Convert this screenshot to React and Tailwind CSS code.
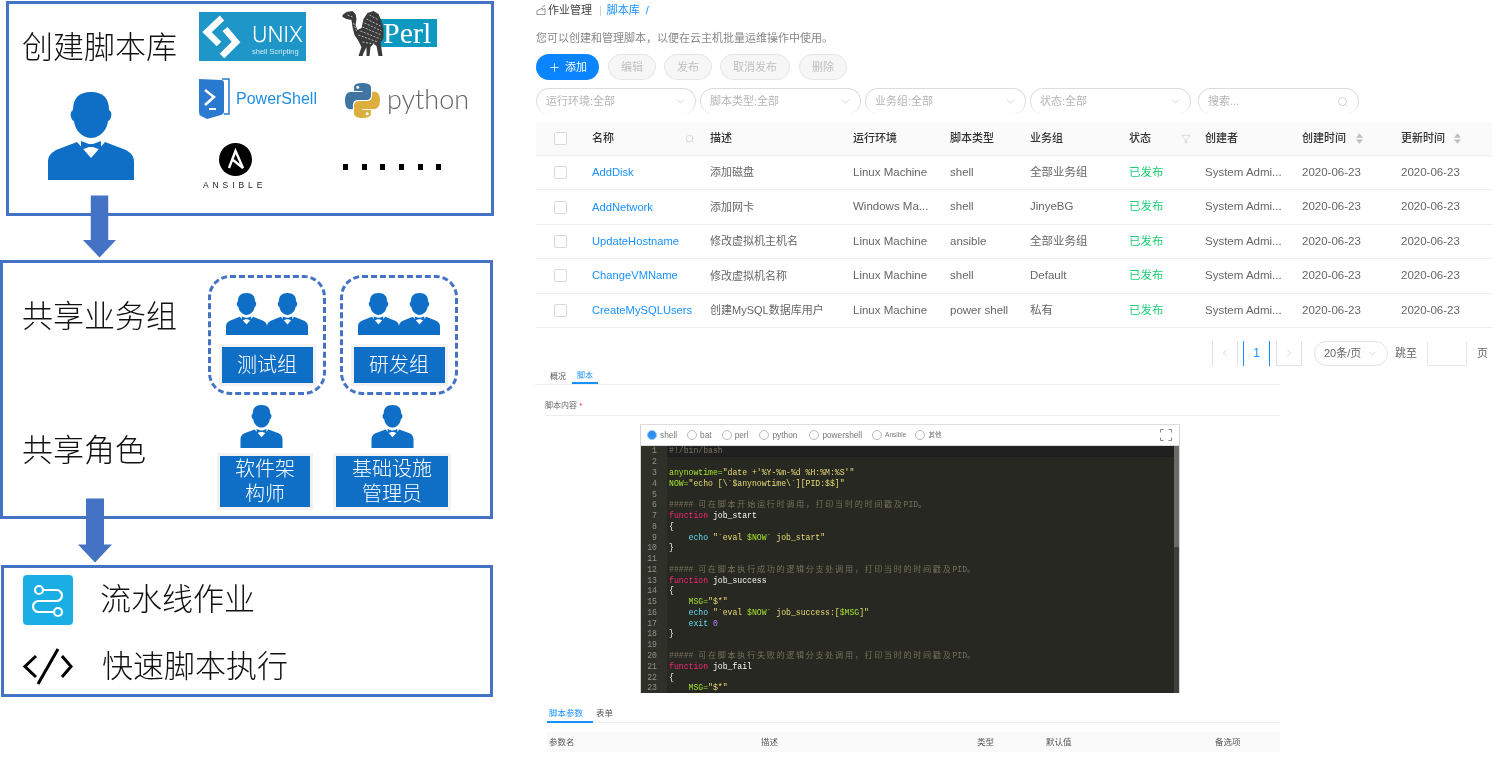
import { ChevronDown, ChevronLeft, ChevronRight, Funnel, Plus, Search } from 'lucide-react';

const sans = "[font-family:'Liberation_Sans','Noto_Sans_CJK_SC',sans-serif]";

const scripts = [
    { name: 'AddDisk', desc: '添加磁盘', env: 'Linux Machine', type: 'shell', group: '全部业务组' },
    { name: 'AddNetwork', desc: '添加网卡', env: 'Windows Ma...', type: 'shell', group: 'JinyeBG' },
    { name: 'UpdateHostname', desc: '修改虚拟机主机名', env: 'Linux Machine', type: 'ansible', group: '全部业务组' },
    { name: 'ChangeVMName', desc: '修改虚拟机名称', env: 'Linux Machine', type: 'shell', group: 'Default' },
    { name: 'CreateMySQLUsers', desc: '创建MySQL数据库用户', env: 'Linux Machine', type: 'power shell', group: '私有' },
];

const cols = 'grid grid-cols-[56px_118px_143px_97px_80px_99px_76px_97px_99px_91px] items-center';

const C = 'text-[#75715e]';
const G = 'text-[#a6e22e]';
const Y = 'text-[#e6db74]';
const P = 'text-[#f92672]';
const W = 'text-[#f8f8f2]';
const B = 'text-[#66d9ef]';
const V = 'text-[#ae81ff]';

const comment = (cn) => [['##### ', C], [cn, `${C} tracking-[1.65px]`], ['PID', C], ['。', `${C} tracking-[1.65px]`]];

const code = [
    [['#!/bin/bash', C]],
    [],
    [['anynowtime=', G], ['"date +\'%Y-%m-%d %H:%M:%S\'"', Y]],
    [['NOW=', G], ['"echo [\\`$anynowtime\\`][PID:$$]"', Y]],
    [],
    comment('可在脚本开始运行时调用，打印当时的时间戳及'),
    [['function ', P], ['job_start', W]],
    [['{', W]],
    [['    echo ', B], ['"`eval ', Y], ['$NOW', G], ['` job_start"', Y]],
    [['}', W]],
    [],
    comment('可在脚本执行成功的逻辑分支处调用，打印当时的时间戳及'),
    [['function ', P], ['job_success', W]],
    [['{', W]],
    [['    MSG=', G], ['"$*"', Y]],
    [['    echo ', B], ['"`eval ', Y], ['$NOW', G], ['` job_success:[', Y], ['$MSG', G], [']"', Y]],
    [['    exit ', B], ['0', V]],
    [['}', W]],
    [],
    comment('可在脚本执行失败的逻辑分支处调用，打印当时的时间戳及'),
    [['function ', P], ['job_fail', W]],
    [['{', W]],
    [['    MSG=', G], ['"$*"', Y]],
];

const languages = [
    { label: 'shell', gap: 'ml-0', active: true },
    { label: 'bat', gap: 'ml-[10px]' },
    { label: 'perl', gap: 'ml-[10px]' },
    { label: 'python', gap: 'ml-[11px]' },
    { label: 'powershell', gap: 'ml-[12px]' },
    { label: 'Ansible', gap: 'ml-[10px]', small: true },
    { label: '其他', gap: 'ml-[9px]', small: true },
];

function Person({ className }) {
    return (
        <svg viewBox="0 0 86 88" className={className} fill="#0f6fc6">
            <path d="M43 0C55 0 61 6 61 18C63 19 64 22 63 25C62 28 61 29 60 29C59 39 51 46 43 46C35 46 27 39 26 29C25 29 24 28 23 25C22 22 23 19 25 18C25 6 31 0 43 0Z" />
            <path d="M0 88V70C0 64 3 61 8 58L29 50L43 66L57 50L78 58C83 61 86 64 86 70V88Z" />
            <path d="M33 49L41 52H45L53 49V58L45 55H41L33 58Z" />
        </svg>
    );
}

function Duo() {
    return (
        <div className="flex">
            <Person className="w-[41px] h-[44px]" />
            <Person className="w-[41px] h-[44px]" />
        </div>
    );
}

function Tag({ outer, children }) {
    return (
        <div className={`bg-[#f2f2f2] p-[3px] ${outer}`}>
            <div className="h-full bg-[#0f6fc6] text-white text-[20px] leading-[25px] font-light flex items-center justify-center text-center">
                {children}
            </div>
        </div>
    );
}

function Arrow({ className }) {
    return (
        <svg viewBox="0 0 34 64" className={`absolute ${className}`} fill="#4472c4">
            <path d="M8 0H26V46H34L17 64L0 46H8Z" />
        </svg>
    );
}

function Logos() {
    return (
        <div className="pt-[7px] grid grid-cols-[143px_125px] grid-rows-[67px_65px_auto]">
            <div className="mt-[1px] w-[107px] h-[49px] bg-[#1e96c8] flex">
                <svg viewBox="0 0 50 49" className="w-[50px] h-[49px] shrink-0" fill="none" stroke="#fff" strokeWidth="6.5">
                    <path d="M23 6L8 20L20 32" />
                    <path d="M26 17L37 30L23 44" />
                </svg>
                <div className="pl-[3px] flex flex-col text-white">
                    <span className="text-[21px] leading-[24px] mt-[11px] font-light [font-family:Inter,sans-serif]">UNIX</span>
                    <span className="text-[7.5px] leading-[10px] whitespace-nowrap opacity-80">shell Scripting</span>
                </div>
            </div>
            <div className="flex items-start">
                <svg viewBox="0 0 42 46" className="w-[43px] h-[46px] shrink-0 relative z-10" fill="#3a3a3a">
                    <path d="M0 4L4 1L10 0L13 3L14 8L13 14L15 19L19 17L21 8L25 2L31 0L36 3L39 10L41 18L41 27L38 32L39 38L40 45H36L34 35L31 33L28 36L27 45H24L24 36L21 42L20 45H16L19 36L16 30L12 24L10 16L9 9L4 8L0 6Z" />
                    <path d="M18 20L38 28M20 16L39 24M22 12L39 20M24 8L38 15M16 24L35 31M27 4L36 9M5 4L10 6M11 12L14 20M20 31L32 33" stroke="#c8c8c8" strokeWidth="0.9" strokeDasharray="2 1.5" fill="none" />
                </svg>
                <div className="-ml-[5px] mt-[8px] w-[57px] h-[28px] bg-[#0d98bf] text-white text-[30px] leading-[28px] pl-[3px] [font-family:'Liberation_Serif',serif]">
                    Perl
                </div>
            </div>
            <div className="flex items-start">
                <svg viewBox="0 0 31 41" className="w-[31px] h-[41px] shrink-0">
                    <path d="M23 1H30V36H25" fill="none" stroke="#2a7bd0" strokeWidth="1.5" />
                    <path d="M0 1L22 2Q25 2 25 5V34Q25 36 22 37L8 41L2 38Q0 37 0 34Z" fill="#2a7bd0" />
                    <path d="M6 12L15 19L6 27" fill="none" stroke="#fff" strokeWidth="2.5" />
                    <path d="M10 31H17" fill="none" stroke="#fff" strokeWidth="2" />
                </svg>
                <span className="ml-[6px] mt-[11px] text-[16px] leading-[20px] text-[#1f8ee0]">PowerShell</span>
            </div>
            <div className="flex items-start ml-[3px] mt-[5px]">
                <svg viewBox="0 0 110 110" className="w-[35px] h-[35px] shrink-0">
                    <path fill="#3f74a3" d="M54.9 0C26.8 0 28.6 12.2 28.6 12.2l0 12.6h26.8v3.8H17.9S0 26.6 0 54.9c0 28.3 15.6 27.3 15.6 27.3h9.3V69s-.5-15.6 15.4-15.6h26.5s14.9.2 14.9-14.4V14.9S84.1 0 54.9 0zM40.2 8.5a4.8 4.8 0 1 1 0 9.6 4.8 4.8 0 0 1 0-9.6z" />
                    <path fill="#dcae3d" transform="rotate(180 55 55)" d="M54.9 0C26.8 0 28.6 12.2 28.6 12.2l0 12.6h26.8v3.8H17.9S0 26.6 0 54.9c0 28.3 15.6 27.3 15.6 27.3h9.3V69s-.5-15.6 15.4-15.6h26.5s14.9.2 14.9-14.4V14.9S84.1 0 54.9 0zM40.2 8.5a4.8 4.8 0 1 1 0 9.6 4.8 4.8 0 0 1 0-9.6z" />
                </svg>
                <span className="ml-[7px] -mt-[1px] text-[27px] leading-[34px] font-light text-[#646464] whitespace-nowrap [font-family:Lato,sans-serif]">python</span>
            </div>
            <div className="flex flex-col items-start">
                <svg viewBox="0 0 33 33" className="ml-[20px] w-[33px] h-[33px]">
                    <circle cx="16.5" cy="16.5" r="16.5" fill="#000" />
                    <path d="M10 25L16.5 8L24 25L14 17" fill="none" stroke="#fff" strokeWidth="2.4" />
                </svg>
                <span className="mt-[3px] ml-[4px] text-[8.5px] leading-[12px] tracking-[3.9px] whitespace-nowrap text-[#222]">ANSIBLE</span>
            </div>
            <div className="flex gap-[13.7px] mt-[21px] ml-[1px] items-start">
                {[0, 1, 2, 3, 4, 5].map((i) => (
                    <span key={i} className="w-[5px] h-[6px] bg-black" />
                ))}
            </div>
        </div>
    );
}

function LeftPanel() {
    return (
        <div className="w-[494px] shrink-0 text-[#111]">
            <div className="ml-[6px] mt-[1px] w-[488px] h-[215px] border-[3px] border-[#4472c4] flex">
                <div className="w-[190px] shrink-0 pl-[13px]">
                    <div className="mt-[24px] text-[31px] leading-[40px] font-light">创建脚本库</div>
                    <Person className="mt-[24px] ml-[26px] w-[86px] h-[88px]" />
                </div>
                <Logos />
            </div>

            <div className="mt-[44px] w-[493px] h-[259px] border-[3px] border-[#4472c4] flex">
                <div className="w-[205px] shrink-0 pl-[19px] text-[31px] leading-[40px] font-light">
                    <div className="mt-[34px]">共享业务组</div>
                    <div className="mt-[94px]">共享角色</div>
                </div>
                <div className="pt-[12px]">
                    <div className="flex gap-[14px]">
                        <div className="w-[118px] h-[120px] border-[3px] border-dashed border-[#4472c4] rounded-[22px] flex flex-col items-center pt-[14px]">
                            <Duo />
                            <Tag outer="mt-[8px] w-[97px] h-[42px]">测试组</Tag>
                        </div>
                        <div className="w-[118px] h-[120px] border-[3px] border-dashed border-[#4472c4] rounded-[22px] flex flex-col items-center pt-[14px]">
                            <Duo />
                            <Tag outer="mt-[8px] w-[97px] h-[42px]">研发组</Tag>
                        </div>
                    </div>
                    <div className="mt-[10px] flex">
                        <div className="ml-[9px] w-[96px] flex flex-col items-center">
                            <Person className="w-[43px] h-[43px] mr-[7px]" />
                            <Tag outer="mt-[5px] w-[96px] h-[57px]">软件架<br />构师</Tag>
                        </div>
                        <div className="ml-[20px] w-[118px] flex flex-col items-center">
                            <Person className="w-[43px] h-[43px]" />
                            <Tag outer="mt-[5px] w-[118px] h-[57px]">基础设施<br />管理员</Tag>
                        </div>
                    </div>
                </div>
            </div>

            <div className="mt-[46px] ml-[1px] w-[492px] h-[132px] border-[3px] border-[#4472c4] pl-[19px] pt-[7px] text-[31px] leading-[40px] font-light">
                <div className="flex items-center">
                    <div className="w-[50px] h-[50px] rounded-[4px] bg-[#1aaee5]">
                        <svg viewBox="0 0 50 50" className="w-[50px] h-[50px]" fill="none" stroke="#fff" strokeWidth="2.2">
                            <circle cx="16" cy="15" r="4" />
                            <circle cx="35" cy="37" r="4" />
                            <path d="M20 15H33.5A5.5 5.5 0 0 1 33.5 26H15.5A5.5 5.5 0 0 0 15.5 37H31" />
                        </svg>
                    </div>
                    <span className="ml-[27px]">流水线作业</span>
                </div>
                <div className="flex items-center mt-[22px]">
                    <svg viewBox="0 0 50 38" className="w-[50px] h-[38px]" fill="none" stroke="#000" strokeWidth="3">
                        <path d="M13 8L2 18.5L13 29" />
                        <path d="M35 1L15 36" />
                        <path d="M39 8L48 18.5L39 29" />
                    </svg>
                    <span className="ml-[29px]">快速脚本执行</span>
                </div>
            </div>
        </div>
    );
}

function Toolbar() {
    return (
        <div className="mt-[6px] h-[26px] flex text-[11px]">
            <button className="w-[63px] rounded-full bg-[#0a84ff] text-white flex items-center justify-center gap-[4px]">
                <Plus size={13} strokeWidth={1.5} />
                添加
            </button>
            {[['编辑', 'ml-[9px] w-[48px]'], ['发布', 'ml-[8px] w-[48px]'], ['取消发布', 'ml-[8px] w-[70px]'], ['删除', 'ml-[9px] w-[48px]']].map(([label, size]) => (
                <button key={label} className={`${size} rounded-full border border-[#e6e6e6] bg-[#f6f6f6] text-[#bfbfbf]`}>
                    {label}
                </button>
            ))}
        </div>
    );
}

function Filters() {
    return (
        <div className="mt-[8px] h-[26px] flex text-[11px] text-[#b5b5b5]">
            {[['运行环境:全部', 'w-[160px]'], ['脚本类型:全部', 'ml-[4px] w-[161px]'], ['业务组:全部', 'ml-[4px] w-[161px]'], ['状态:全部', 'ml-[4px] w-[161px]']].map(([label, size]) => (
                <div key={label} className={`${size} rounded-full border border-b-0 border-[#dcdcdc] flex items-center justify-between pl-[9px] pr-[8px]`}>
                    {label}
                    <ChevronDown size={13} strokeWidth={1} />
                </div>
            ))}
            <div className="ml-[7px] w-[161px] rounded-full border border-b-0 border-[#dcdcdc] flex items-center justify-between pl-[9px] pr-[9px]">
                搜索...
                <Search size={12} strokeWidth={1.2} />
            </div>
        </div>
    );
}

function SortIcon() {
    return (
        <svg viewBox="0 0 8 12" className="w-[7px] h-[11px]" fill="#bfbfbf">
            <path d="M4 0L8 5H0Z" />
            <path d="M4 12L0 7H8Z" />
        </svg>
    );
}

function ScriptTable() {
    return (
        <div className="mt-[8px] text-[11.5px]">
            <div className={`${cols} h-[34px] bg-[#fafafa] border-b border-[#efefef] font-medium text-[#333] text-[11px]`}>
                <div className="pl-[18px]"><span className="block w-[13px] h-[13px] rounded-[2px] bg-white border border-[#d9d9d9]" /></div>
                <div className="flex items-center justify-between pr-[15px]">名称<Search size={10} strokeWidth={1.2} className="text-[#bbb]" /></div>
                <div>描述</div>
                <div>运行环境</div>
                <div>脚本类型</div>
                <div>业务组</div>
                <div className="flex items-center justify-between pr-[14px]">状态<Funnel size={10} strokeWidth={1} className="text-[#aaa]" /></div>
                <div>创建者</div>
                <div className="flex items-center gap-[10px]">创建时间<SortIcon /></div>
                <div className="flex items-center gap-[9px]">更新时间<SortIcon /></div>
            </div>
            {scripts.map((s) => (
                <div key={s.name} className={`${cols} h-[34.4px] border-b border-[#eeeeee] text-[#666]`}>
                    <div className="pl-[18px]"><span className="block w-[13px] h-[13px] rounded-[2px] border border-[#d9d9d9]" /></div>
                    <div className="text-[11.2px] text-[#1890ff]">{s.name}</div>
                    <div className="text-[11px] whitespace-nowrap">{s.desc}</div>
                    <div>{s.env}</div>
                    <div>{s.type}</div>
                    <div>{s.group}</div>
                    <div className="text-[#1ccf74]">已发布</div>
                    <div>System Admi...</div>
                    <div>2020-06-23</div>
                    <div>2020-06-23</div>
                </div>
            ))}
        </div>
    );
}

function Pagination() {
    return (
        <div className="mt-[13px] h-[25px] flex items-center text-[11px] text-[#666]">
            <div className="ml-[676px] w-[26px] h-full border-x border-[#e2e2e2] flex items-center justify-center text-[#bbb]">
                <ChevronLeft size={12} strokeWidth={1.2} />
            </div>
            <div className="ml-[5px] w-[27px] h-full border-x border-[#1890ff] flex items-center justify-center text-[#1890ff] text-[12px]">1</div>
            <div className="ml-[6px] w-[26px] h-full border-x border-b border-[#e2e2e2] flex items-center justify-center text-[#bbb]">
                <ChevronRight size={12} strokeWidth={1.2} />
            </div>
            <div className="ml-[12px] w-[74px] h-full rounded-full border border-[#e2e2e2] flex items-center pl-[9px] gap-[6px] whitespace-nowrap">
                20条/页
                <ChevronDown size={11} strokeWidth={1} className="text-[#aaa]" />
            </div>
            <span className="ml-[7px]">跳至</span>
            <div className="ml-[10px] w-[40px] h-full border-x border-b border-[#e6e6e6] rounded-b-[2px]" />
            <span className="ml-[10px]">页</span>
        </div>
    );
}

function Editor() {
    return (
        <div className="ml-[105px] mt-[8px] w-[540px] h-[269px] border-x border-[#d5d5d5] flex flex-col">
            <div className="h-[22px] border-y border-[#dddddd] flex items-center pl-[6px] pr-[7px] text-[8.3px] text-[#777]">
                {languages.map((l) => (
                    <div key={l.label} className={`flex items-center gap-[3px] ${l.gap}`}>
                        <span className={`w-[10px] h-[10px] rounded-full border ${l.active ? 'border-[#8fc4f7] bg-[#2f8df0]' : 'border-[#bbb] bg-white'}`} />
                        <span className={l.small ? 'text-[6.5px]' : ''}>{l.label}</span>
                    </div>
                ))}
                <svg viewBox="0 0 12 12" className="ml-auto w-[12px] h-[12px]" fill="none" stroke="#888" strokeWidth="1">
                    <path d="M0.5 3.5V0.5H3.5M8.5 0.5H11.5V3.5M11.5 8.5V11.5H8.5M3.5 11.5H0.5V8.5" />
                </svg>
            </div>
            <div className="flex-1 min-h-0 flex overflow-hidden bg-[#272822] text-[8.15px] leading-[10.78px] [font-family:'Liberation_Mono','Noto_Sans_CJK_SC',monospace]">
                <div className="w-[26px] shrink-0 bg-[#2f3129] text-[#8f908a] text-right pr-[10px] pt-[0.5px] blur-[0.3px]">
                    {code.map((_, i) => <div key={i} className="h-[10.78px]">{i + 1}</div>)}
                </div>
                <div className="flex-1 min-w-0 pt-[0.5px] blur-[0.3px]">
                    {code.map((line, i) => (
                        <div key={i} className={`h-[10.78px] whitespace-pre pl-[2px] ${i === 0 ? 'bg-[#202020]' : ''}`}>
                            {line.map(([text, color], j) => <span key={j} className={color}>{text}</span>)}
                        </div>
                    ))}
                </div>
                <div className="w-[5px] shrink-0 bg-[#3f403a]">
                    <div className="h-[101px] bg-[#6b6c66]" />
                </div>
            </div>
        </div>
    );
}

function RightPanel() {
    return (
        <div className={`ml-[41px] w-[957px] shrink-0 ${sans}`}>
            <div className="h-[20px] pl-[1px] flex items-center text-[11px] text-[#444]">
                <svg viewBox="0 0 11 11" className="w-[10px] h-[10px]" fill="none" stroke="#888" strokeWidth="1">
                    <path d="M1 10.5H10V4L7 5.5V3.5L1 6.5Z" />
                    <path d="M7 2L10 0.5" />
                </svg>
                <span className="ml-[2px]">作业管理</span>
                <span className="ml-[7px] text-[#ccc]">|</span>
                <span className="ml-[5px] text-[#1890ff]">脚本库</span>
                <span className="ml-[6px] text-[#1890ff]">/</span>
            </div>
            <div className="mt-[8px] h-[20px] pl-[1px] flex items-center text-[11px] text-[#888]">您可以创建和管理脚本，以便在云主机批量运维操作中使用。</div>
            <div className="pl-[1px]">
                <Toolbar />
                <Filters />
                <ScriptTable />
                <Pagination />
            </div>

            <div className="w-[745px]">
                <div className="mt-[4px] h-[15px] border-b border-[#eeeeee] flex items-center pl-[15px] text-[8px] text-[#555]">
                    <span>概况</span>
                    <span className="ml-[6px] w-[26px] h-full flex items-center justify-center text-[#1890ff] border-b-2 border-[#1890ff]">脚本</span>
                </div>
                <div className="mt-[15px] ml-[10px] h-[16px] pt-[1px] border-b border-[#eeeeee] text-[8px] leading-[10px] text-[#666]">
                    脚本内容 <span className="text-[#f5222d]">*</span>
                </div>
                <Editor />
                <div className="mt-[13px] ml-[12px] h-[17px] border-b border-[#eeeeee] flex items-start text-[8.5px] leading-[15px] text-[#555]">
                    <span className="w-[46px] h-[17px] pl-[2px] text-[#1890ff] border-b-2 border-[#1890ff]">脚本参数</span>
                    <span className="ml-[3px]">表单</span>
                </div>
                <div className="mt-[9px] ml-[11px] h-[20px] bg-[#fafafa] grid grid-cols-[212px_216px_69px_169px_65px] items-center pl-[3px] text-[8.5px] text-[#555]">
                    <span>参数名</span>
                    <span>描述</span>
                    <span>类型</span>
                    <span>默认值</span>
                    <span>备选项</span>
                </div>
            </div>
        </div>
    );
}

export default function App() {
    return (
        <div className={`relative w-[1500px] h-[770px] overflow-hidden bg-white flex blur-[0.4px] ${sans}`}>
            <LeftPanel />
            <RightPanel />
            <Arrow className="left-[83px] top-[195px] w-[33px] h-[63px]" />
            <Arrow className="left-[78px] top-[498px] w-[34px] h-[65px]" />
        </div>
    );
}
